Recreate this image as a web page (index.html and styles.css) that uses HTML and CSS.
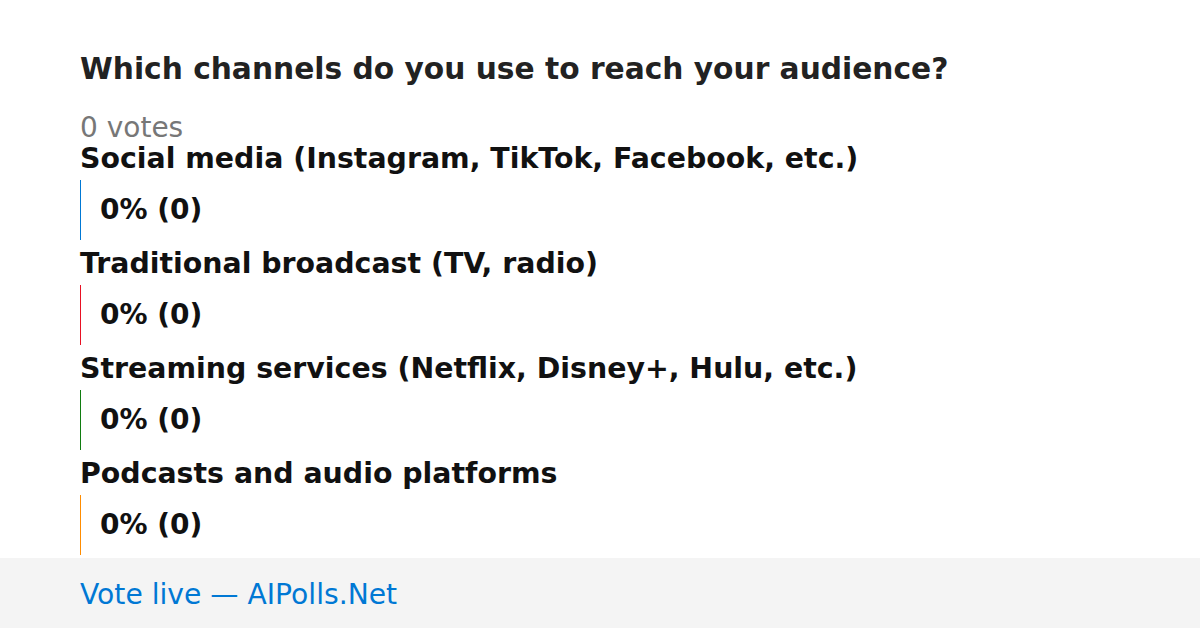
FILE: index.html
```html
<!DOCTYPE html>
<html lang="en">
<head>
    <meta charset="UTF-8">
    <meta name="viewport" content="width=device-width, initial-scale=1.0">
    <title>Poll results</title>
    <link rel="stylesheet" href="styles.css">
</head>
<body>
    <div class="poll">
        <h1 class="question">Which channels do you use to reach your audience?</h1>
        <p class="votes">0 votes</p>

        <div class="option">
            <div class="option-label">Social media (Instagram, TikTok, Facebook, etc.)</div>
            <div class="option-bar bar-blue">0% (0)</div>
        </div>
        <div class="option">
            <div class="option-label">Traditional broadcast (TV, radio)</div>
            <div class="option-bar bar-red">0% (0)</div>
        </div>
        <div class="option">
            <div class="option-label">Streaming services (Netflix, Disney+, Hulu, etc.)</div>
            <div class="option-bar bar-green">0% (0)</div>
        </div>
        <div class="option">
            <div class="option-label">Podcasts and audio platforms</div>
            <div class="option-bar bar-orange">0% (0)</div>
        </div>
    </div>

    <div class="footer">Vote live — AIPolls.Net</div>
</body>
</html>
```

FILE: styles.css
```css
body {
    font-family: 'DejaVu Sans', sans-serif;
    background-color: #fff;
    margin: 0;
    padding: 0;
    height: 628px;
    display: flex;
    flex-direction: column;
    overflow: hidden;
}
.poll {
    flex: 1;
    min-height: 0;
    padding: 52px 80px 0;
}
.question {
    color: #222;
    font-size: 29.7px;
    line-height: 34px;
    font-weight: bold;
    margin: 0 0 27px;
}
.votes {
    color: #777;
    font-size: 28px;
    line-height: 30px;
    margin: 0 0 1px;
}
.option {
    margin-bottom: 9px;
}
.option-label {
    color: #111;
    font-size: 28.4px;
    line-height: 30px;
    font-weight: bold;
    margin-bottom: 6px;
}
.option-bar {
    height: 60px;
    line-height: 60px;
    padding-left: 19px;
    border-left: 1px solid #0078d4;
    color: #111;
    font-size: 28px;
    font-weight: bold;
}
.bar-blue { border-left-color: #0078d4; }
.bar-red { border-left-color: #e81123; }
.bar-green { border-left-color: #107c10; }
.bar-orange { border-left-color: #ff8c00; }
.footer {
    flex-shrink: 0;
    height: 70px;
    box-sizing: border-box;
    padding: 20px 80px 0;
    line-height: 34px;
    background-color: #f4f4f4;
    color: #0078d4;
    font-size: 28.2px;
}
```
